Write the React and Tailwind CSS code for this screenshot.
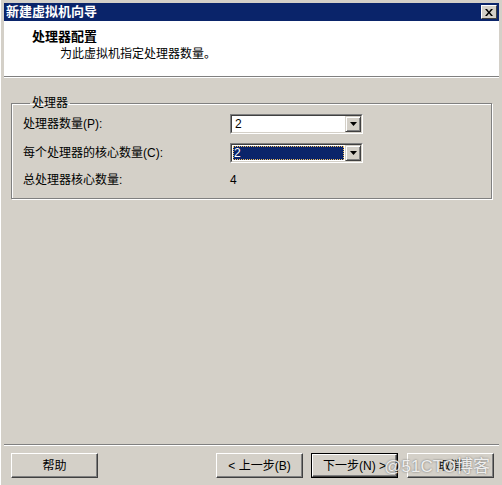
import React from "react";

function Combo({ value, selected }) {
  return (
    <div className="w-[133px] h-[20px] flex border border-t-[#808080] border-l-[#808080] border-b-white border-r-white">
      <div className="flex-1 flex border border-t-[#404040] border-l-[#404040] border-b-[#d4d0c8] border-r-[#d4d0c8] bg-white">
        <div className="flex-1 flex items-center px-[1px] py-[1px]">
          {selected ? (
            <span className="h-full w-full flex items-center bg-[#0a246a] text-white outline-1 outline-dotted outline-[#f0c060] -outline-offset-1 pl-[1px]">
              {value}
            </span>
          ) : (
            <span className="pl-[2px] text-black">{value}</span>
          )}
        </div>
        <div className="w-[16px] h-full bg-[#d4d0c8] flex items-center justify-center border border-t-[#d4d0c8] border-l-[#d4d0c8] border-b-[#404040] border-r-[#404040] shadow-[inset_1px_1px_0_white,inset_-1px_-1px_0_#808080]">
          <svg width="7" height="4" viewBox="0 0 7 4">
            <path d="M0 0h7L3.5 4z" fill="#000" />
          </svg>
        </div>
      </div>
    </div>
  );
}

function Btn({ children, def, className = "" }) {
  return (
    <div className={"w-[87px] h-[25px] " + (def ? "border border-black" : "") + " " + className}>
      <div className="w-full h-full flex items-center justify-center border border-t-white border-l-white border-b-[#404040] border-r-[#404040] shadow-[inset_-1px_-1px_0_#808080] text-black">
        {children}
      </div>
    </div>
  );
}

export default function App() {
  return (
    <div
      className="w-[502px] h-[485px] bg-[#d4d0c8] flex flex-col pt-[3px] pl-[3px] pr-[3px] text-[12px] leading-[14px] relative border-l border-l-white"
      style={{ fontFamily: '"Liberation Sans", "Noto Sans CJK SC", sans-serif' }}
    >
      <div className="h-[18px] bg-[#0a246a] flex items-center justify-between pl-[2px] pr-[2px]">
        <span className="text-white font-bold text-[13px]">新建虚拟机向导</span>
        <div className="w-[16px] h-[14px] bg-[#d4d0c8] flex items-center justify-center border border-t-white border-l-white border-b-[#404040] border-r-[#404040]">
          <svg width="8" height="7" viewBox="0 0 8 7">
            <path d="M0 0h2l2 2.5L6 0h2L5 3.5 8 7H6L4 4.5 2 7H0l3-3.5z" fill="#000" />
          </svg>
        </div>
      </div>

      <div className="h-[56px] bg-white border-b border-b-[#808080] shadow-[0_1px_0_white] flex flex-col pt-[9px]">
        <div className="flex">
          <div className="w-[28px] shrink-0" />
          <span className="font-bold text-[13px] text-black">处理器配置</span>
        </div>
        <div className="flex mt-[3px]">
          <div className="w-[56px] shrink-0" />
          <span className="text-black">为此虚拟机指定处理器数量。</span>
        </div>
      </div>

      <div className="flex-1 flex flex-col pl-[7px] pr-[5px] pt-[19px]">
        <fieldset className="w-[481px] h-[103px] border border-[#808080] shadow-[inset_1px_1px_0_white,1px_1px_0_white] pl-[11px] pb-[8px]">
          <legend className="ml-[7px] px-[2px] text-black">处理器</legend>
          <div className="flex items-center h-[20px] mt-[4px]">
            <span className="w-[207px] text-black">处理器数量(P):</span>
            <Combo value="2" />
          </div>
          <div className="flex items-center h-[20px] mt-[9px]">
            <span className="w-[207px] text-black">每个处理器的核心数量(C):</span>
            <Combo value="2" selected />
          </div>
          <div className="flex items-center h-[20px] mt-[7px]">
            <span className="w-[207px] text-black">总处理器核心数量:</span>
            <span className="text-black">4</span>
          </div>
        </fieldset>

        <div className="flex-1" />

        <div className="h-[2px] border-t border-t-[#808080] border-b border-b-white -ml-[7px] -mr-[5px]" />

        <div className="flex items-center h-[39px]">
          <Btn>帮助</Btn>
          <div className="flex-1" />
          <Btn>&lt; 上一步(B)</Btn>
          <Btn def className="ml-[8px]">下一步(N) &gt;</Btn>
          <Btn className="ml-[9px]">取消</Btn>
        </div>
      </div>

      <span className="absolute right-[12px] bottom-[8px] text-[17px] leading-[20px] text-white/85 [text-shadow:0_0_2px_#606060]">
        @51CTO博客
      </span>
    </div>
  );
}
